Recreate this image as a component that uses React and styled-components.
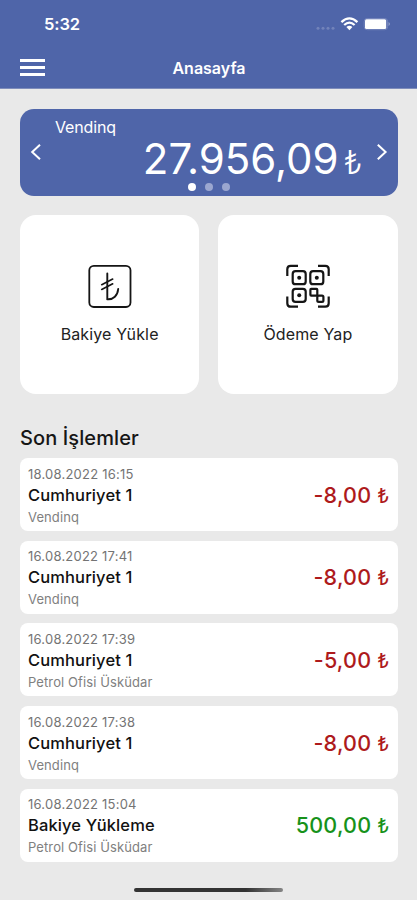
import React from "react";
import styled, { createGlobalStyle } from "styled-components";

const GlobalStyle = createGlobalStyle`
  * { box-sizing: border-box; }
  body { margin: 0; background: #e9e9e9; }
  button { border: 0; padding: 0; background: none; font: inherit; color: inherit; }
`;

const Screen = styled.div`
  width: 417px;
  height: 900px;
  display: flex;
  flex-direction: column;
  overflow: hidden;
  background: #e9e9e9;
  color: #111;
  font-family: Inter, "Liberation Sans", sans-serif;
  white-space: nowrap;
`;

const Header = styled.header`
  height: 89px;
  flex: none;
  background: #4f65a9;
  border-bottom: 1px solid #7f8dbb;
  color: #fff;
`;

const StatusBar = styled.div`
  height: 48px;
  padding: 0 26px 0 44px;
  display: flex;
  align-items: center;
  justify-content: space-between;
`;

const Clock = styled.span`
  font-size: 16.5px;
  font-weight: 600;
  line-height: 20px;
  letter-spacing: -0.1px;
`;

const StatusIcons = styled.svg`
  width: 76px;
  height: 16px;
  display: block;
`;

const NavBar = styled.div`
  height: 40px;
  padding: 0 19px 0 20px;
  display: grid;
  grid-template-columns: 25px 1fr 25px;
  align-items: center;
`;

const MenuButton = styled.button`
  display: grid;
  gap: 4px;
  margin-bottom: 1px;
`;

const MenuLine = styled.span`
  height: 3px;
  background: #fff;
`;

const PageTitle = styled.h1`
  margin: 0;
  font-size: 16px;
  font-weight: 600;
  line-height: 20px;
  text-align: center;
`;

const Main = styled.main`
  flex: 1;
  padding: 19.5px 19.5px 0 20px;
  display: flex;
  flex-direction: column;
`;

const BalanceCard = styled.section`
  height: 87px;
  flex: none;
  border-radius: 14px;
  background: #4f65a9;
  color: #fff;
  display: grid;
  grid-template-columns: 35px 1fr 35px;
  align-items: center;
`;

const ArrowButton = styled.button`
  height: 24px;
  padding: ${({ $side }) => ($side === "right" ? "0 0 0 3px" : "0 3px 0 0")};
  display: flex;
  align-items: center;
  justify-content: center;
`;

const ArrowIcon = styled.svg`
  width: 12px;
  height: 18px;
`;

const BalanceBody = styled.div`
  height: 87px;
  padding-top: 8px;
  display: flex;
  flex-direction: column;
`;

const AccountName = styled.span`
  font-size: 16px;
  line-height: 20px;
  letter-spacing: -0.15px;
`;

const Balance = styled.div`
  height: 44px;
  display: flex;
  justify-content: flex-end;
  align-items: baseline;
  gap: 5px;
  font-size: 42px;
  line-height: 43px;
`;

const BalanceCurrency = styled.span`
  font-size: 33px;
  font-weight: 300;
  line-height: 30px;
`;

const Dots = styled.div`
  display: flex;
  justify-content: center;
  gap: 9px;
  margin-top: 2px;
`;

const Dot = styled.span`
  width: 8px;
  height: 8px;
  border-radius: 50%;
  background: ${({ $active }) => ($active ? "#fff" : "#9ba7d0")};
`;

const Actions = styled.div`
  margin-top: 19.5px;
  display: grid;
  grid-template-columns: 1fr 1fr;
  gap: 19px;
`;

const ActionTile = styled.button`
  height: 179px;
  border-radius: 16px;
  background: #fff;
  display: flex;
  flex-direction: column;
  align-items: center;
  padding-top: 49px;
`;

const ActionIcon = styled.svg`
  width: 44px;
  height: 45px;
  flex: none;
`;

const ActionLabel = styled.span`
  margin-top: 15px;
  font-size: 16px;
  line-height: 20px;
  color: #222;
  letter-spacing: 0.14px;
`;

const SectionTitle = styled.h2`
  margin: 32px 0 8px;
  font-size: 20px;
  font-weight: 500;
  line-height: 24px;
  letter-spacing: 0.1px;
  color: #161616;
`;

const History = styled.ul`
  margin: 0;
  padding: 0;
  list-style: none;
  display: grid;
  gap: 9.7px;
`;

const HistoryRow = styled.li`
  height: 73px;
  padding: 0 8px;
  border-radius: 8px;
  background: #fff;
  display: flex;
  align-items: center;
  justify-content: space-between;
`;

const Details = styled.div`
  display: flex;
  flex-direction: column;
  padding-top: 1px;
`;

const DateText = styled.span`
  font-size: 13px;
  line-height: 20px;
  letter-spacing: 0.22px;
  color: #747474;
`;

const Name = styled.span`
  font-size: 16.5px;
  font-weight: 500;
  line-height: 23px;
  letter-spacing: 0.12px;
  color: #111;
`;

const Place = styled.span`
  font-size: 13px;
  line-height: 20px;
  letter-spacing: 0.1px;
  color: #808080;
`;

const Amount = styled.span`
  font-size: 21.5px;
  font-weight: 500;
  letter-spacing: 0.25px;
  color: ${({ $credit }) => ($credit ? "#17921a" : "#ae1a1c")};
`;

const Lira = styled.span`
  font-weight: 400;
  font-size: 20.5px;
  letter-spacing: 0;
`;

const HomeIndicator = styled.div`
  width: 149px;
  height: 4px;
  margin: auto auto 8px;
  flex: none;
  border-radius: 2px;
  background: linear-gradient(90deg, #333 75%, #858585);
`;

const transactions = [
  { date: "18.08.2022 16:15", name: "Cumhuriyet 1", place: "Vendinq", amount: "-8,00" },
  { date: "16.08.2022 17:41", name: "Cumhuriyet 1", place: "Vendinq", amount: "-8,00" },
  { date: "16.08.2022 17:39", name: "Cumhuriyet 1", place: "Petrol Ofisi Üsküdar", amount: "-5,00" },
  { date: "16.08.2022 17:38", name: "Cumhuriyet 1", place: "Vendinq", amount: "-8,00" },
  { date: "16.08.2022 15:04", name: "Bakiye Yükleme", place: "Petrol Ofisi Üsküdar", amount: "500,00", credit: true },
];

function PhoneStatus() {
  return (
    <StatusIcons viewBox="0 0 76 16" fill="none">
      <g fill="#7283ba">
        <circle cx="3" cy="12.3" r="1.5" />
        <circle cx="8" cy="12.3" r="1.5" />
        <circle cx="13" cy="12.3" r="1.5" />
        <circle cx="18" cy="12.3" r="1.5" />
      </g>
      <g stroke="#fff" strokeWidth="2.3">
        <path d="M26.4 6.2Q34.4-1.4 42.4 6.2" />
        <path d="M29.2 9Q34.4 4.3 39.6 9" />
      </g>
      <path d="M31.4 11Q34.4 8.6 37.4 11L34.4 14.2Z" fill="#fff" />
      <rect x="49.2" y="2.5" width="23.4" height="11.2" rx="3" stroke="#7e8dc0" strokeWidth=".8" />
      <rect x="50" y="3.3" width="21.2" height="9.6" rx="1.5" fill="#fff" />
      <path d="M73.6 6.1q2.4 2 0 4" fill="#a0acd2" />
    </StatusIcons>
  );
}

function LiraIcon() {
  return (
    <ActionIcon viewBox="0 0 44 45" fill="none" stroke="#151515" strokeLinecap="round">
      <rect x="1.3" y="1.8" width="41.2" height="41.2" rx="4.5" strokeWidth="1.8" />
      <path d="M19.3 9.5V35.2C25.5 35.8 29.6 31.5 30.2 25" strokeWidth="1.9" />
      <path d="M13.7 20.7L24.7 15M13.7 25.5L24.7 19.8" strokeWidth="1.6" />
    </ActionIcon>
  );
}

function QrIcon() {
  return (
    <ActionIcon viewBox="0 0 44 45" fill="none" stroke="#151515" strokeWidth="2.2" strokeLinejoin="round">
      <path d="M1.3 12V5.2Q1.3 1.8 4.7 1.8H12M32 1.8H39.3Q42.7 1.8 42.7 5.2V12M42.7 32.5V39.3Q42.7 42.7 39.3 42.7H32M12 42.7H4.7Q1.3 42.7 1.3 39.3V32.5" />
      <rect x="6.7" y="7.2" width="13" height="13" rx="2.8" />
      <rect x="24.3" y="7.2" width="13" height="13" rx="2.8" />
      <rect x="6.7" y="24.8" width="13" height="13" rx="2.8" />
      <rect x="24.4" y="24.9" width="6.9" height="6.7" rx=".8" />
      <rect x="31.3" y="31.6" width="6.1" height="6.2" rx="1.4" />
      <g fill="#151515" stroke="none">
        <circle cx="13.2" cy="13.7" r="2" />
        <circle cx="30.8" cy="13.7" r="2" />
        <circle cx="13.2" cy="31.3" r="2" />
      </g>
    </ActionIcon>
  );
}

function Arrow({ path }) {
  return (
    <ArrowIcon viewBox="0 0 12 18" fill="none" stroke="#fff" strokeWidth="2">
      <path d={path} />
    </ArrowIcon>
  );
}

export default function App() {
  return (
    <>
      <GlobalStyle />
      <Screen>
        <Header>
          <StatusBar>
            <Clock>5:32</Clock>
            <PhoneStatus />
          </StatusBar>
          <NavBar>
            <MenuButton aria-label="Menü">
              <MenuLine />
              <MenuLine />
              <MenuLine />
            </MenuButton>
            <PageTitle>Anasayfa</PageTitle>
          </NavBar>
        </Header>
        <Main>
          <BalanceCard>
            <ArrowButton $side="left" aria-label="Önceki"><Arrow path="M10 1.7L2.2 9L10 16.3" /></ArrowButton>
            <BalanceBody>
              <AccountName>Vendinq</AccountName>
              <Balance>
                27.956,09
                <BalanceCurrency>₺</BalanceCurrency>
              </Balance>
              <Dots>
                <Dot $active />
                <Dot />
                <Dot />
              </Dots>
            </BalanceBody>
            <ArrowButton $side="right" aria-label="Sonraki"><Arrow path="M1.8 1.7L9.6 9L1.8 16.3" /></ArrowButton>
          </BalanceCard>
          <Actions>
            <ActionTile>
              <LiraIcon />
              <ActionLabel>Bakiye Yükle</ActionLabel>
            </ActionTile>
            <ActionTile>
              <QrIcon />
              <ActionLabel>Ödeme Yap</ActionLabel>
            </ActionTile>
          </Actions>
          <SectionTitle>Son İşlemler</SectionTitle>
          <History>
            {transactions.map((item) => (
              <HistoryRow key={item.date}>
                <Details>
                  <DateText>{item.date}</DateText>
                  <Name>{item.name}</Name>
                  <Place>{item.place}</Place>
                </Details>
                <Amount $credit={item.credit}>
                  {item.amount} <Lira>₺</Lira>
                </Amount>
              </HistoryRow>
            ))}
          </History>
          <HomeIndicator />
        </Main>
      </Screen>
    </>
  );
}
